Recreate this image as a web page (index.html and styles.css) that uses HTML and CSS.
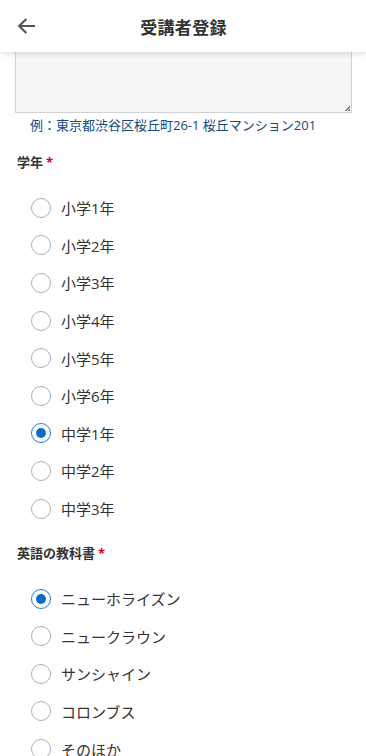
FILE: index.html
```html
<!DOCTYPE html>
<html lang="ja">
<head>
<meta charset="utf-8">
<link rel="stylesheet" href="styles.css">
</head>
<body>
<header class="topbar">
  <button class="back" aria-label="戻る">
    <svg width="18" height="16" viewBox="0 0 18 16"><path d="M17 8H2.5M8.5 1.8L2.2 8l6.3 6.2" fill="none" stroke="#555" stroke-width="2.2" stroke-linecap="square"/></svg>
  </button>
  <h1 class="title">受講者登録</h1>
</header>
<main class="form">
  <div class="textarea"><span class="grip"></span></div>
  <p class="hint">例：東京都渋谷区桜丘町26-1 桜丘マンション201</p>

  <div class="label">学年<span class="req">*</span></div>
  <ul class="radios">
    <li class="opt"><span class="dot"></span>小学1年</li>
    <li class="opt"><span class="dot"></span>小学2年</li>
    <li class="opt"><span class="dot"></span>小学3年</li>
    <li class="opt"><span class="dot"></span>小学4年</li>
    <li class="opt"><span class="dot"></span>小学5年</li>
    <li class="opt"><span class="dot"></span>小学6年</li>
    <li class="opt"><span class="dot on"></span>中学1年</li>
    <li class="opt"><span class="dot"></span>中学2年</li>
    <li class="opt"><span class="dot"></span>中学3年</li>
  </ul>

  <div class="label">英語の教科書<span class="req">*</span></div>
  <ul class="radios">
    <li class="opt"><span class="dot on"></span>ニューホライズン</li>
    <li class="opt"><span class="dot"></span>ニュークラウン</li>
    <li class="opt"><span class="dot"></span>サンシャイン</li>
    <li class="opt"><span class="dot"></span>コロンブス</li>
    <li class="opt"><span class="dot"></span>そのほか</li>
  </ul>
</main>
</body>
</html>
```
FILE: styles.css
```css
html, body {
  margin: 0;
  padding: 0;
  background: #fff;
  font-family: "Open Sans", "Noto Sans CJK JP", sans-serif;
  color: #333;
  overflow: hidden;
}
.topbar {
  position: relative;
  z-index: 2;
  height: 52px;
  display: flex;
  align-items: center;
  justify-content: center;
  background: #fff;
  box-shadow: 0 2px 6px rgba(0,0,0,0.12);
}
.back {
  position: absolute;
  left: 17px;
  top: 18px;
  padding: 0;
  border: 0;
  background: none;
  display: flex;
}
.title {
  margin: 0;
  font-size: 17px;
  font-weight: 700;
  color: #333;
  letter-spacing: 0.3px;
  padding-left: 1px;
}
.form {
  padding: 0 14px 0 15px;
}
.textarea {
  position: relative;
  height: 60px;
  background: #f5f6f8;
  border: 1px solid #cfd2d6;
  border-top: 0;
  box-sizing: content-box;
}
.grip {
  position: absolute;
  right: 1px;
  bottom: 1px;
  width: 5px;
  height: 5px;
  background: linear-gradient(135deg, transparent 45%, #777 45%, #777 60%, transparent 60%, transparent 75%, #777 75%);
}
.hint {
  margin: 0;
  padding-left: 15px;
  font-size: 13px;
  line-height: 24px;
  color: #134a80;
}
.label {
  margin-top: 15px;
  padding-left: 2px;
  font-size: 13px;
  font-weight: 700;
  line-height: 20px;
  color: #333;
}
.req {
  color: #d0021b;
  margin-left: 3px;
}
.radios {
  list-style: none;
  margin: 17px 0 0;
  padding: 0;
}
.opt {
  height: 37.6px;
  display: flex;
  align-items: center;
  gap: 10px;
  padding-left: 16px;
  font-size: 15px;
  color: #333;
}
.dot {
  box-sizing: border-box;
  width: 20px;
  height: 20px;
  border-radius: 50%;
  border: 1px solid #aab0b7;
  background: #fff;
  display: flex;
  align-items: center;
  justify-content: center;
  flex: none;
}
.dot.on {
  border: 1.5px solid #1f7fd4;
}
.dot.on::after {
  content: "";
  width: 10px;
  height: 10px;
  border-radius: 50%;
  background: #0a6dc8;
}
.radios + .label {
  margin-top: 15.5px;
}
```
